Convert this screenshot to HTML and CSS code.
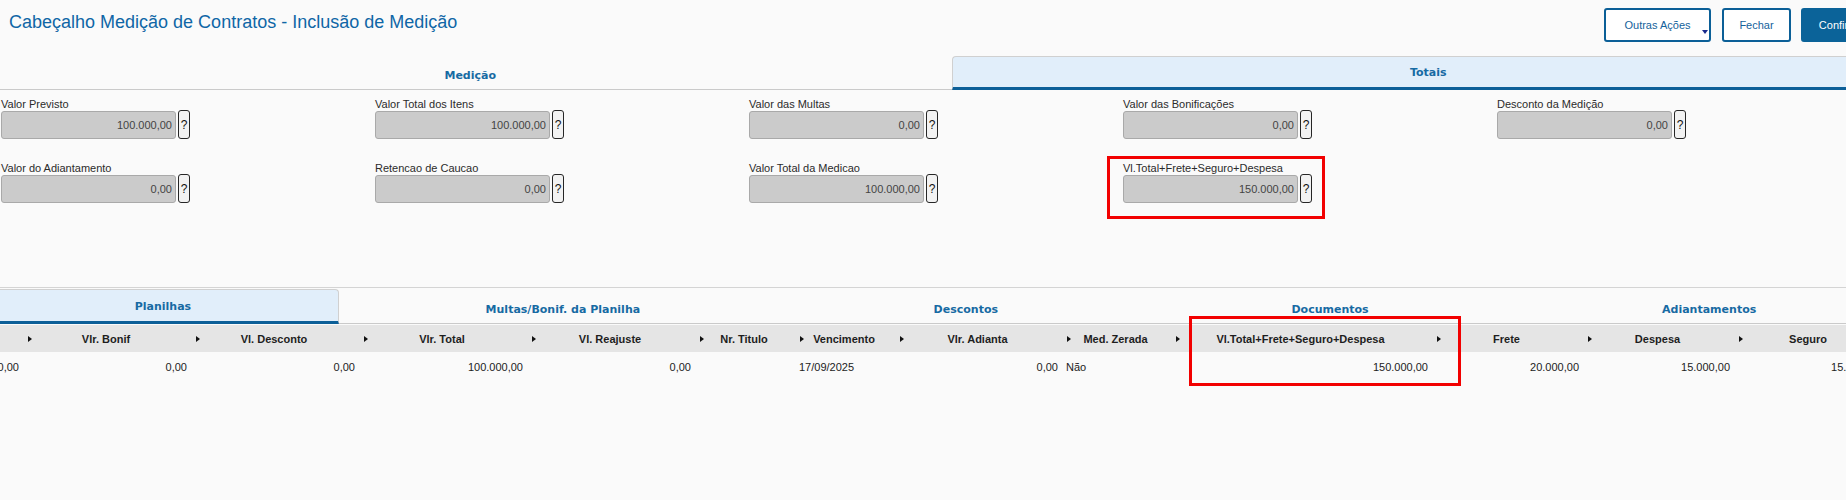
FILE: index.html
```html
<!DOCTYPE html>
<html>
	<head>
		<meta charset="UTF-8">
		<title>Cabeçalho Medição de Contratos - Inclusão de Medição</title>
		<link rel="stylesheet" href="styles.css">
	</head>
	<body>
		<div class="page">
			<header class="topbar">
				<h1 class="title">Cabeçalho Medição de Contratos - Inclusão de Medição</h1>
				<div class="actions">
					<button class="btn btn-drop">Outras Ações<span class="caret"></span></button>
					<button class="btn btn-close">Fechar</button>
					<button class="btn btn-primary">Confirmar</button>
				</div>
			</header>

			<nav class="tabs tabs-top">
				<div class="tab">Medição</div>
				<div class="tab active">Totais</div>
			</nav>

			<section class="fields">
				<div class="field">
					<label>Valor Previsto</label>
					<div class="input-row"><div class="input">100.000,00</div><button class="help">?</button></div>
				</div>
				<div class="field">
					<label>Valor Total dos Itens</label>
					<div class="input-row"><div class="input">100.000,00</div><button class="help">?</button></div>
				</div>
				<div class="field">
					<label>Valor das Multas</label>
					<div class="input-row"><div class="input">0,00</div><button class="help">?</button></div>
				</div>
				<div class="field">
					<label>Valor das Bonificações</label>
					<div class="input-row"><div class="input">0,00</div><button class="help">?</button></div>
				</div>
				<div class="field">
					<label>Desconto da Medição</label>
					<div class="input-row"><div class="input">0,00</div><button class="help">?</button></div>
				</div>
				<div class="field">
					<label>Valor do Adiantamento</label>
					<div class="input-row"><div class="input">0,00</div><button class="help">?</button></div>
				</div>
				<div class="field">
					<label>Retencao de Caucao</label>
					<div class="input-row"><div class="input">0,00</div><button class="help">?</button></div>
				</div>
				<div class="field">
					<label>Valor Total da Medicao</label>
					<div class="input-row"><div class="input">100.000,00</div><button class="help">?</button></div>
				</div>
				<div class="field">
					<label>Vl.Total+Frete+Seguro+Despesa</label>
					<div class="input-row"><div class="input">150.000,00</div><button class="help">?</button></div>
					<div class="mark mark-field"></div>
				</div>
			</section>

			<section class="detail">
				<nav class="tabs tabs-bottom">
					<div class="tab active">Planilhas</div>
					<div class="tab">Multas/Bonif. da Planilha</div>
					<div class="tab">Descontos</div>
					<div class="tab">Documentos</div>
					<div class="tab">Adiantamentos</div>
				</nav>

				<div class="grid-wrap">
					<div class="grid">
						<div class="th"><i class="sort"></i><span>Vlr. Multa</span></div>
						<div class="th"><i class="sort"></i><span>Vlr. Bonif</span></div>
						<div class="th"><i class="sort"></i><span>Vl. Desconto</span></div>
						<div class="th"><i class="sort"></i><span>Vlr. Total</span></div>
						<div class="th"><i class="sort"></i><span>Vl. Reajuste</span></div>
						<div class="th"><i class="sort"></i><span>Nr. Titulo</span></div>
						<div class="th"><i class="sort"></i><span>Vencimento</span></div>
						<div class="th"><i class="sort"></i><span>Vlr. Adianta</span></div>
						<div class="th"><i class="sort"></i><span>Med. Zerada</span></div>
						<div class="th"><i class="sort"></i><span>Vl.Total+Frete+Seguro+Despesa</span></div>
						<div class="th"><i class="sort"></i><span>Frete</span></div>
						<div class="th"><i class="sort"></i><span>Despesa</span></div>
						<div class="th"><i class="sort"></i><span>Seguro</span></div>
						<div class="th"><i class="sort"></i><span>Vlr. Liquido</span></div>

						<div class="td">0,00</div>
						<div class="td">0,00</div>
						<div class="td">0,00</div>
						<div class="td">100.000,00</div>
						<div class="td">0,00</div>
						<div class="td"></div>
						<div class="td txt">17/09/2025</div>
						<div class="td">0,00</div>
						<div class="td txt">Não</div>
						<div class="td">150.000,00</div>
						<div class="td">20.000,00</div>
						<div class="td">15.000,00</div>
						<div class="td">15.000,00</div>
						<div class="td">150.000,00</div>
					</div>
					<div class="mark mark-grid"></div>
				</div>
			</section>
		</div>
	</body>
</html>
```

FILE: styles.css
```css
html {
	overflow: hidden;
	background: #fafafa;
}
body {
	margin: 0;
	padding: 0;
	min-height: 500px;
	font-family: "Liberation Sans", Arial, sans-serif;
	font-size: 11px;
	color: #333;
}
.page {
	width: 1915px;
	margin-left: -12px;
}

/* cabecalho */
.topbar {
	height: 56px;
	box-sizing: border-box;
	display: flex;
	justify-content: space-between;
	align-items: flex-start;
	padding: 8px 18px 0 21px;
}
.title {
	margin: 4px 0 0;
	font-size: 18px;
	line-height: 20px;
	font-weight: normal;
	color: #0f66a6;
}
.actions {
	display: flex;
	gap: 10px;
}
.btn {
	position: relative;
	height: 34px;
	box-sizing: border-box;
	border: 2px solid #0b5f97;
	border-radius: 3px;
	background: #fff;
	color: #14629b;
	font-family: "Liberation Sans", Arial, sans-serif;
	font-size: 11px;
	padding: 0;
}
.btn-drop { width: 107px; }
.btn-close { width: 69px; margin-left: 1px; }
.btn-primary {
	width: 84px;
	background: #0b6399;
	border-color: #0b6399;
	color: #fff;
}
.caret {
	position: absolute;
	right: 1px;
	bottom: 6px;
	width: 0;
	height: 0;
	border-left: 3.5px solid transparent;
	border-right: 3.5px solid transparent;
	border-top: 4px solid #1a2a8c;
}

/* abas */
.tabs {
	display: flex;
}
.tab {
	flex: 1 1 auto;
	box-sizing: border-box;
	text-align: center;
	font-family: "DejaVu Sans", Verdana, sans-serif;
	font-weight: bold;
	font-size: 11px;
	line-height: 13px;
	color: #176aa3;
	white-space: nowrap;
	border-bottom: 1px solid #cacaca;
}
.tab.active {
	background: #e1eefa;
	border: 1px solid #d0d0d0;
	border-bottom: 3px solid #0c5f98;
}
.tabs-top .tab {
	height: 34px;
	padding-top: 13px;
}
.tabs-top .tab.active {
	padding-top: 9px;
	border-right: 0;
	border-radius: 4px 0 0 0;
}
.tabs-bottom .tab {
	height: 35px;
	padding-top: 14px;
}
.tabs-bottom .tab.active {
	padding-top: 10px;
	border-left: 0;
	border-radius: 0 4px 0 0;
}

/* campos */
.fields {
	display: grid;
	grid-template-columns: repeat(5, 374px);
	row-gap: 23px;
	padding: 8px 0 0 13px;
}
.field {
	position: relative;
}
.field label {
	display: block;
	height: 13px;
	line-height: 13px;
	color: #2b2b2b;
	white-space: nowrap;
}
.input-row {
	display: flex;
	gap: 2px;
}
.input {
	width: 175px;
	height: 28px;
	box-sizing: border-box;
	border: 1px solid #a9a9a9;
	border-radius: 3px;
	background: #cbcbcb;
	color: #444;
	text-align: right;
	line-height: 26px;
	padding-right: 3px;
}
.help {
	width: 12px;
	height: 29px;
	margin-top: -1px;
	box-sizing: border-box;
	border: 1px solid #262626;
	border-radius: 3px;
	background: #f2f2f2;
	padding: 0;
	font-family: "Liberation Sans", Arial, sans-serif;
	font-size: 12px;
	color: #111;
}

/* marcacoes em vermelho */
.mark {
	position: absolute;
	border: 3px solid #f20000;
	box-sizing: border-box;
	pointer-events: none;
}
.mark-field {
	left: -16px;
	top: -6px;
	width: 218px;
	height: 63px;
}
.mark-grid {
	left: 1201px;
	top: -9px;
	width: 272px;
	height: 70px;
}

/* grade */
.detail {
	margin-top: 84px;
	border-top: 1px solid #d4d4d4;
	padding-top: 1px;
}
.grid-wrap {
	position: relative;
	margin-top: 1px;
}
.grid {
	display: grid;
	grid-template-columns: 168px 168px 168px 168px 168px 100px 100px 167px 109px 261px 151px 151px 150px 168px;
	margin-left: -132px;
	width: max-content;
}
.th {
	height: 27px;
	display: flex;
	align-items: center;
	background: #e5e5e5;
	padding-right: 12px;
	font-weight: bold;
	color: #1e1e1e;
	white-space: nowrap;
}
.th span {
	flex: 1;
	text-align: center;
}
.sort {
	width: 0;
	height: 0;
	margin-left: 4px;
	border-left: 4px solid #111;
	border-top: 3.5px solid transparent;
	border-bottom: 3.5px solid transparent;
}
.td {
	height: 30px;
	line-height: 30px;
	padding: 0 5px 0 3px;
	text-align: right;
	color: #222;
	white-space: nowrap;
	overflow: hidden;
}
.td.txt {
	text-align: left;
}
```
